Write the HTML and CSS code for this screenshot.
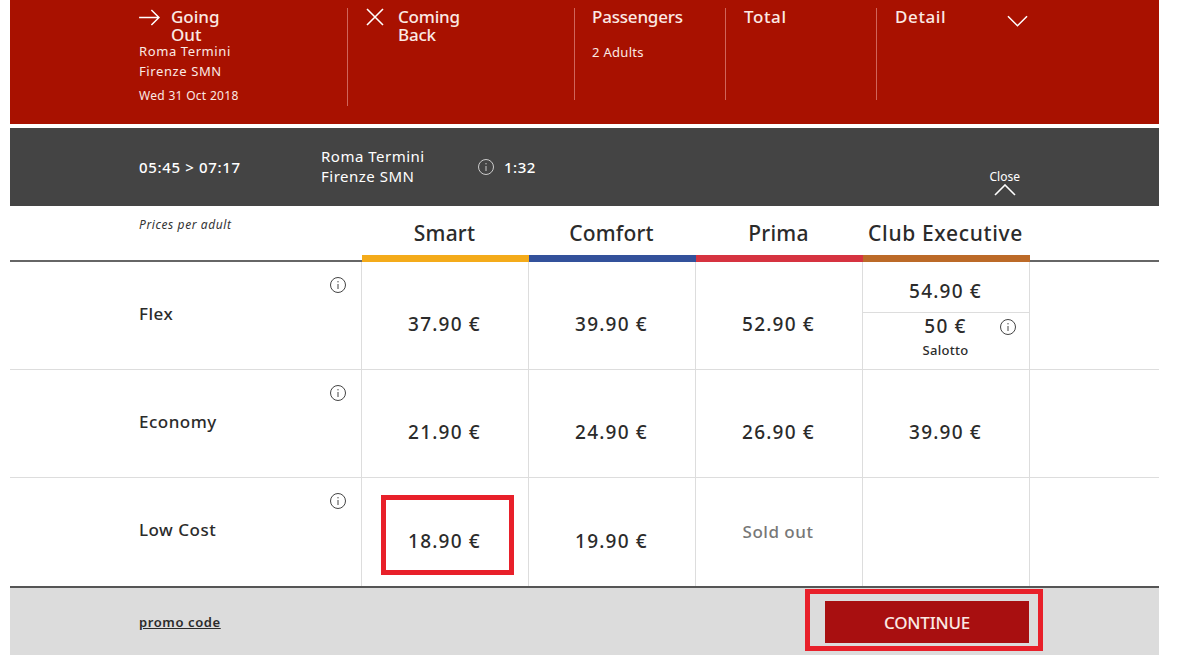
FILE: index.html
```html
<!DOCTYPE html>
<html lang="en">
<head>
<meta charset="utf-8">
<title>Choose your fare</title>
<link rel="stylesheet" href="styles.css">
</head>
<body>
<svg class="defs" width="0" height="0" aria-hidden="true">
  <symbol id="info" viewBox="0 0 16 16">
    <circle cx="8" cy="8" r="7.5" fill="none" stroke="currentColor" stroke-width="1"/>
    <path d="M8 7v5M8 4v1.4" fill="none" stroke="currentColor" stroke-width="1"/>
  </symbol>
</svg>
<main class="page">
  <header class="summary">
    <section class="step step-out">
      <div class="step-head">
        <svg class="icon-arrow" viewBox="0 0 22 18"><path d="M0 9h21M13 1l8 8-8 8" fill="none" stroke="#fff" stroke-width="1.6"/></svg>
        <h2 class="step-title">Going<br>Out</h2>
      </div>
      <p class="route">Roma Termini</p>
      <p class="route">Firenze SMN</p>
      <p class="date">Wed 31 Oct 2018</p>
    </section>
    <section class="step step-back">
      <div class="step-head">
        <svg class="icon-x" viewBox="0 0 18 18"><path d="M1 1l16 16M17 1L1 17" fill="none" stroke="#fff" stroke-width="1.6"/></svg>
        <h2 class="step-title">Coming<br>Back</h2>
      </div>
    </section>
    <section class="step step-pass">
      <h2 class="step-title">Passengers</h2>
      <p class="adults">2 Adults</p>
    </section>
    <section class="step step-total">
      <h2 class="step-title">Total</h2>
    </section>
    <section class="step step-detail">
      <h2 class="step-title">Detail</h2>
      <svg class="icon-down" viewBox="0 0 22 12"><path d="M1 1l10 10L21 1" fill="none" stroke="#fff" stroke-width="1.6"/></svg>
    </section>
  </header>

  <section class="train">
    <div class="times">05:45 &gt; 07:17</div>
    <div class="stations"><div>Roma Termini</div><div>Firenze SMN</div></div>
    <div class="duration"><svg class="info info-light"><use href="#info"/></svg><span>1:32</span></div>
    <div class="close">
      <span>Close</span>
      <svg class="icon-up" viewBox="0 0 22 12"><path d="M1 11L11 1l10 10" fill="none" stroke="#fff" stroke-width="1.6"/></svg>
    </div>
  </section>

  <section class="fares">
    <div class="head-note"><em>Prices per adult</em></div>
    <div class="cls cls-smart">Smart</div>
    <div class="cls cls-comfort">Comfort</div>
    <div class="cls cls-prima">Prima</div>
    <div class="cls cls-club">Club Executive</div>
    <div class="head-end"></div>

    <div class="fare">Flex<svg class="info info-row"><use href="#info"/></svg></div>
    <div class="price">37.90 €</div>
    <div class="price">39.90 €</div>
    <div class="price">52.90 €</div>
    <div class="price split">
      <div class="split-top">54.90 €</div>
      <div class="split-bottom">50 €<small>Salotto</small><svg class="info info-salotto"><use href="#info"/></svg></div>
    </div>
    <div class="end"></div>

    <div class="fare">Economy<svg class="info info-row"><use href="#info"/></svg></div>
    <div class="price">21.90 €</div>
    <div class="price">24.90 €</div>
    <div class="price">26.90 €</div>
    <div class="price">39.90 €</div>
    <div class="end"></div>

    <div class="fare">Low Cost<svg class="info info-row"><use href="#info"/></svg></div>
    <div class="price low">18.90 €<span class="mark mark-price"></span></div>
    <div class="price low">19.90 €</div>
    <div class="price sold">Sold out</div>
    <div class="price"></div>
    <div class="end"></div>
  </section>

  <footer class="actions">
    <a class="promo" href="#">promo code</a>
    <button class="continue" type="button">CONTINUE<span class="mark mark-button"></span></button>
  </footer>
</main>
</body>
</html>
```
FILE: styles.css
```css
* { box-sizing: border-box; }
html, body { margin: 0; padding: 0; background: #fff; }
body { font-family: "Noto Sans", "DejaVu Sans", sans-serif; color: #2b2b2b; overflow: hidden; }
.defs { position: absolute; }
h2, p { margin: 0; font-weight: inherit; }

.page { width: 1149px; margin-left: 10px; height: 655px; display: flex; flex-direction: column; }

/* Summary band */
.summary { height: 124px; background: #a81100; color: #fbe9e4; display: flex; padding: 8px 0 0 129px; margin-bottom: 4px; }
.step { position: relative; border-right: 1px solid #d0655a; height: 92px; flex: none; }
.step-out { width: 209px; height: 98px; }
.step-back { width: 227px; padding-left: 18px; }
.step-pass { width: 151px; padding-left: 17px; }
.step-total { width: 151px; padding-left: 18px; }
.step-detail { width: 152px; padding-left: 18px; border-right: 0; display: flex; align-items: flex-start; }
.step-head { display: flex; align-items: flex-start; }
.step-title { font-size: 17px; line-height: 18px; font-weight: 500; }
.step-back .step-title { letter-spacing: -.2px; }
.step-pass .step-title { letter-spacing: -.2px; }
.step-total .step-title, .step-detail .step-title { letter-spacing: .6px; }
.step-out .step-title { margin-left: 11px; }
.step-back .step-title { margin-left: 14px; }
.icon-arrow { width: 21px; height: 17px; margin-top: 1px; flex: none; }
.icon-x { width: 18px; height: 18px; flex: none; }
.icon-down { width: 21px; height: 12px; margin: 7px 0 0 61px; flex: none; }
.route { font-size: 13px; line-height: 20px; letter-spacing: .6px; }
.route:first-of-type { margin-top: -3px; }
.date { font-size: 12px; line-height: 16px; margin-top: 7px; letter-spacing: .3px; }
.adults { font-size: 13px; line-height: 20px; margin-top: 16px; letter-spacing: .3px; }

/* Train band */
.train { position: relative; height: 78px; background: #444; color: #fff; display: flex; align-items: center; padding: 0 0 0 129px; font-size: 15px; }
.times { width: 182px; font-weight: 500; letter-spacing: .65px; }
.stations { width: 157px; line-height: 20px; letter-spacing: .5px; margin-top: -3px; }
.duration { display: flex; align-items: center; gap: 10px; font-weight: 500; letter-spacing: .5px; }
.close { position: absolute; right: 139px; top: 41px; display: flex; flex-direction: column; align-items: center; font-size: 12px; line-height: 14px; }
.close span { margin-top: 1px; }
.icon-up { width: 22px; height: 12px; margin-top: 0; }

.info { width: 16px; height: 16px; display: block; color: #444; }
.info-light { color: #ccc; }

/* Fare table */
.fares { display: grid; grid-template-columns: 352px 167px 167px 167px 167px 129px; grid-template-rows: 56px 108px 108px 108px; }
.head-note { font-size: 12px; padding: 10px 0 0 129px; border-bottom: 2px solid #666; color: #333; letter-spacing: .6px; }
.head-end { border-bottom: 2px solid #666; }
.cls { font-size: 21px; font-weight: 500; text-align: center; padding: 13px 2px 0 0; line-height: 29px; border-bottom: 7px solid; letter-spacing: .2px; white-space: nowrap; }
.cls-smart { border-color: #f4ab1a; }
.cls-comfort { border-color: #33519b; }
.cls-prima { border-color: #d63340; }
.cls-club { border-color: #bc6a28; letter-spacing: .65px; }

.fare { position: relative; padding: 40px 0 0 129px; font-size: 17px; line-height: 24px; font-weight: 500; letter-spacing: .5px; border-right: 1px solid #ddd; border-bottom: 1px solid #ddd; }
.info-row { position: absolute; top: 15px; right: 15px; }
.price { position: relative; border-right: 1px solid #ddd; border-bottom: 1px solid #ddd; font-size: 19px; font-weight: 500; text-align: center; padding: 49px 1px 0 0; line-height: 26px; letter-spacing: 1.2px; }
.low { padding-top: 50px; }
.end { border-bottom: 1px solid #ddd; }
.fares > :nth-last-child(-n+6) { border-bottom: 0; }
.sold { color: #777; font-size: 17px; padding-top: 41px; padding-right: 2px; letter-spacing: .5px; }

.split { padding: 0; }
.split-top { height: 51px; padding: 16px 1px 0 0; border-bottom: 1px solid #ddd; }
.split-bottom { position: relative; padding-right: 1px; }
.split-bottom small { display: block; font-size: 13px; line-height: 20px; margin-top: 1px; letter-spacing: .3px; }
.info-salotto { position: absolute; top: 6px; right: 13px; }

/* Annotations */
.mark { position: absolute; border: 5px solid #e8202a; pointer-events: none; }
.mark-price { left: 19px; top: 17px; width: 133px; height: 80px; }
.mark-button { left: -20px; top: -12px; width: 238px; height: 62px; }

/* Footer */
.actions { flex: 1; background: #dcdcdc; border-top: 2px solid #555; display: flex; align-items: flex-start; padding-left: 129px; position: relative; }
.promo { font-size: 13px; font-weight: 600; color: #2b2b2b; margin-top: 25px; letter-spacing: .6px; }
.continue { position: relative; margin: 13px 130px 0 auto; width: 204px; height: 42px; border: 0; background: #a80f10; color: #fbe9e4; font: 500 17px "Noto Sans", sans-serif; letter-spacing: -.2px; }
```
